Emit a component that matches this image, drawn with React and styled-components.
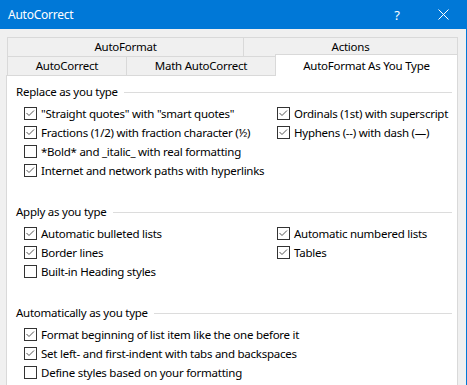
import React from "react";
import styled, { createGlobalStyle } from "styled-components";

const Global = createGlobalStyle`
  html, body { margin: 0; padding: 0; background: #F0F0F0; }
  body { font-family: "Segoe UI", "Noto Sans", sans-serif; font-size: 11.5px; letter-spacing: -0.25px; color: #000; }
  * { box-sizing: border-box; }
`;

const Window = styled.div`
  width: 467px;
  height: 385px;
  overflow: hidden;
  background: #F0F0F0;
  border-right: 1px solid #0078D7;
  display: flex;
  flex-direction: column;
`;

const TitleBar = styled.div`
  height: 29px;
  flex: none;
  background: #0078D7;
  color: #fff;
  display: flex;
  align-items: center;
  padding-left: 8px;
`;

const Title = styled.div`
  flex: 1;
  font-size: 12px;
  line-height: 16px;
`;

const TitleButton = styled.div`
  width: 46px;
  height: 29px;
  display: flex;
  align-items: center;
  justify-content: center;
  font-size: 13px;
`;

const Content = styled.div`
  flex: 1;
  padding: 8px 8px 0 6px;
  display: flex;
  flex-direction: column;
`;

const Tabs = styled.div`
  margin-left: 1px;
  width: 451px;
  display: flex;
  flex-direction: column;
`;

const TabRow = styled.div`
  display: flex;
  height: 19px;
`;

const Tab = styled.div`
  width: ${(p) => p.$w}px;
  margin-left: ${(p) => (p.$first ? 0 : -1)}px;
  height: ${(p) => (p.$selected ? 22 : 19)}px;
  margin-top: ${(p) => (p.$selected ? -2 : 0)}px;
  padding-top: ${(p) => (p.$selected ? 1 : 0)}px;
  border: 1px solid #D9D9D9;
  border-bottom: none;
  background: ${(p) => (p.$selected ? "#fff" : "#F0F0F0")};
  position: relative;
  z-index: ${(p) => (p.$selected ? 2 : 1)};
  display: flex;
  align-items: center;
  justify-content: center;
  line-height: 16px;
  white-space: nowrap;
`;

const Panel = styled.div`
  flex: 1;
  background: #fff;
  border: 1px solid #D9D9D9;
  border-bottom: none;
  padding: 8px 5px 0 9px;
`;

const Section = styled.div`
  & + & { margin-top: 24px; }
`;

const Header = styled.div`
  display: flex;
  align-items: center;
  height: 16px;
  line-height: 16px;
  gap: 6px;
  white-space: nowrap;
`;

const Rule = styled.div`
  flex: 1;
  height: 1px;
  background: #DCDCDC;
`;

const Columns = styled.div`
  display: grid;
  grid-template-columns: 253px auto;
  padding: 4px 0 0 8px;
`;

const Column = styled.div`
  display: flex;
  flex-direction: column;
`;

const Row = styled.div`
  display: flex;
  align-items: center;
  height: 19px;
  white-space: nowrap;
  line-height: 16px;
`;

const Box = styled.span`
  width: 13px;
  height: 13px;
  flex: none;
  border: 1px solid #333;
  background: #fff;
  margin-right: 4px;
  display: flex;
  align-items: center;
  justify-content: center;
`;

function Check({ checked, children }) {
  return (
    <Row>
      <Box>
        {checked && (
          <svg width="11" height="11" viewBox="0 0 11 11">
            <polyline points="1.5,5 4,7.5 9,2.5" fill="none" stroke="#555" strokeWidth="1" />
          </svg>
        )}
      </Box>
      {children}
    </Row>
  );
}

export default function App() {
  return (
    <>
      <Global />
      <Window>
        <TitleBar>
          <Title>AutoCorrect</Title>
          <TitleButton>?</TitleButton>
          <TitleButton>
            <svg width="11" height="11" viewBox="0 0 11 11">
              <path d="M0.5 0.5 L10.5 10.5 M10.5 0.5 L0.5 10.5" stroke="#fff" strokeWidth="1" fill="none" />
            </svg>
          </TitleButton>
        </TitleBar>
        <Content>
          <Tabs>
            <TabRow>
              <Tab $first $w={237}>AutoFormat</Tab>
              <Tab $w={215}>Actions</Tab>
            </TabRow>
            <TabRow>
              <Tab $first $w={120}>AutoCorrect</Tab>
              <Tab $w={150}>Math AutoCorrect</Tab>
              <Tab $w={183} $selected>AutoFormat As You Type</Tab>
            </TabRow>
          </Tabs>
          <Panel>
            <Section>
              <Header>Replace as you type<Rule /></Header>
              <Columns>
                <Column>
                  <Check checked>"Straight quotes" with "smart quotes"</Check>
                  <Check checked>Fractions (1/2) with fraction character (½)</Check>
                  <Check>*Bold* and _italic_ with real formatting</Check>
                  <Check checked>Internet and network paths with hyperlinks</Check>
                </Column>
                <Column>
                  <Check checked>Ordinals (1st) with superscript</Check>
                  <Check checked>Hyphens (--) with dash (—)</Check>
                </Column>
              </Columns>
            </Section>
            <Section>
              <Header>Apply as you type<Rule /></Header>
              <Columns>
                <Column>
                  <Check checked>Automatic bulleted lists</Check>
                  <Check checked>Border lines</Check>
                  <Check>Built-in Heading styles</Check>
                </Column>
                <Column>
                  <Check checked>Automatic numbered lists</Check>
                  <Check checked>Tables</Check>
                </Column>
              </Columns>
            </Section>
            <Section>
              <Header>Automatically as you type<Rule /></Header>
              <Columns>
                <Column>
                  <Check checked>Format beginning of list item like the one before it</Check>
                  <Check checked>Set left- and first-indent with tabs and backspaces</Check>
                  <Check>Define styles based on your formatting</Check>
                </Column>
              </Columns>
            </Section>
          </Panel>
        </Content>
      </Window>
    </>
  );
}
